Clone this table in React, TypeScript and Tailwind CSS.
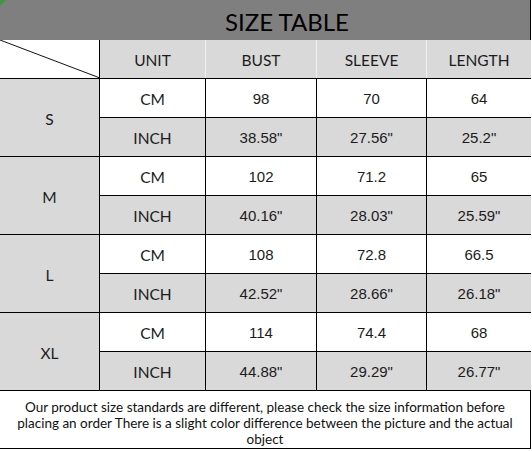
import React from 'react';

const rows = [
  { size: 'S', cm: ['98', '70', '64'], inch: ['38.58"', '27.56"', '25.2"'] },
  { size: 'M', cm: ['102', '71.2', '65'], inch: ['40.16"', '28.03"', '25.59"'] },
  { size: 'L', cm: ['108', '72.8', '66.5'], inch: ['42.52"', '28.66"', '26.18"'] },
  { size: 'XL', cm: ['114', '74.4', '68'], inch: ['44.88"', '29.29"', '26.77"'] },
];

const label = "font-['Lato','Liberation_Sans',sans-serif] text-[15.5px] text-[#1c1c1c] pt-[4px]";
const num = "font-['Liberation_Sans',Arial,sans-serif] text-[15px] text-[#1c1c1c] pt-[3px]";

export default function App() {
  return (
    <div className="w-[532px] h-[451px] bg-white overflow-hidden">
      <div className="w-[531px] border-r border-black">
        {/* title band */}
        <div className="relative h-[40px] bg-[#7f7f7f] flex items-center pl-[225px] pt-[3px]">
          <div className="absolute left-0 top-0 w-0 h-0 border-t-[6px] border-r-[6px] border-t-[#3c9a3c] border-r-transparent" />
          <span className="font-['Lato','Liberation_Sans',sans-serif] text-[24px] leading-none text-black">
            SIZE TABLE
          </span>
        </div>

        {/* header */}
        <div className="grid grid-cols-[100px_106px_111px_110px_104px] h-[39px] border-b border-black">
          <div className="relative bg-white border-r border-black">
            <svg className="absolute inset-0" width="100" height="38" viewBox="0 0 100 38">
              <line x1="0" y1="0" x2="100" y2="38" stroke="#111" strokeWidth="1" />
            </svg>
          </div>
          {['UNIT', 'BUST', 'SLEEVE', 'LENGTH'].map((h, i) => (
            <div
              key={h}
              className={`bg-[#d9d9d9] flex items-center justify-center ${label} ${i < 3 ? 'border-r border-[#f0f0f0]' : ''}`}
            >
              {h}
            </div>
          ))}
        </div>

        {/* body */}
        {rows.map((r) => (
          <div key={r.size} className="grid grid-cols-[100px_431px] border-b border-black">
            <div className={`bg-[#d9d9d9] border-r border-black flex items-center justify-center ${label}`}>
              {r.size}
            </div>
            <div className="flex flex-col">
              <div className="grid grid-cols-[106px_111px_110px_104px] h-[39px] bg-white border-b border-black">
                <div className={`flex items-center justify-center border-r border-black ${label}`}>CM</div>
                {r.cm.map((v, i) => (
                  <div key={i} className={`flex items-center justify-center ${num} ${i < 2 ? 'border-r border-black' : ''}`}>
                    {v}
                  </div>
                ))}
              </div>
              <div className="grid grid-cols-[106px_111px_110px_104px] h-[38px] bg-[#d9d9d9]">
                <div className={`flex items-center justify-center border-r border-black ${label}`}>INCH</div>
                {r.inch.map((v, i) => (
                  <div key={i} className={`flex items-center justify-center ${num} ${i < 2 ? 'border-r border-black' : ''}`}>
                    {v}
                  </div>
                ))}
              </div>
            </div>
          </div>
        ))}

        {/* footer note */}
        <div className="h-[58px] border-b border-black flex items-start justify-center pt-[8px]">
          <p className="font-['Lato','Liberation_Sans',sans-serif] text-[13.5px] leading-[16px] text-[#111] text-center px-[8px]">
            Our product size standards are different, please check the size information before placing an order There is a slight color difference between the picture and the actual object
          </p>
        </div>
      </div>
    </div>
  );
}
